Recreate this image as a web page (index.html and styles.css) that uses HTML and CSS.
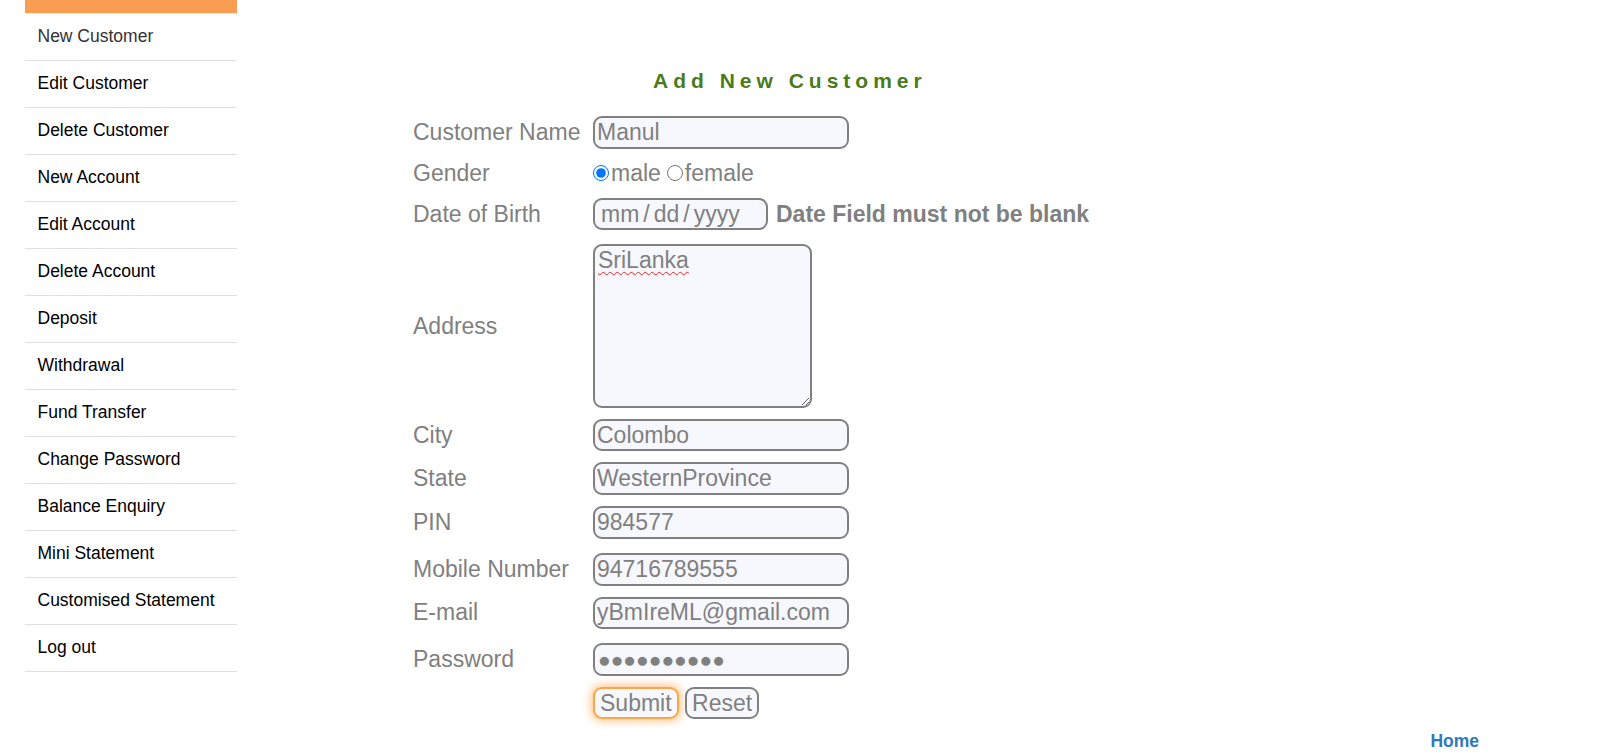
FILE: index.html
```html
<!DOCTYPE html>
<html lang="en">
<head>
<meta charset="utf-8">
<title>Guru99 Bank - Add New Customer</title>
<link rel="stylesheet" href="styles.css">
</head>
<body>
<div class="page">
  <nav class="sidebar">
    <div class="sidebar-top"></div>
    <ul class="menu">
      <li class="menu-item active"><a href="#">New Customer</a></li>
      <li class="menu-item"><a href="#">Edit Customer</a></li>
      <li class="menu-item"><a href="#">Delete Customer</a></li>
      <li class="menu-item"><a href="#">New Account</a></li>
      <li class="menu-item"><a href="#">Edit Account</a></li>
      <li class="menu-item"><a href="#">Delete Account</a></li>
      <li class="menu-item"><a href="#">Deposit</a></li>
      <li class="menu-item"><a href="#">Withdrawal</a></li>
      <li class="menu-item"><a href="#">Fund Transfer</a></li>
      <li class="menu-item"><a href="#">Change Password</a></li>
      <li class="menu-item"><a href="#">Balance Enquiry</a></li>
      <li class="menu-item"><a href="#">Mini Statement</a></li>
      <li class="menu-item"><a href="#">Customised Statement</a></li>
      <li class="menu-item"><a href="#">Log out</a></li>
    </ul>
  </nav>
  <main class="main">
    <p class="heading">Add New Customer</p>
    <form class="form" onsubmit="return false;">
      <label class="lbl">Customer Name</label>
      <div class="field"><input class="txt" type="text" value="Manul"></div>

      <label class="lbl">Gender</label>
      <div class="field gender"><input class="radio" type="radio" name="gender" checked>male <input class="radio radio-second" type="radio" name="gender">female</div>

      <label class="lbl">Date of Birth</label>
      <div class="field"><input class="txt date" type="date"> <label class="msg">Date Field must not be blank</label></div>

      <label class="lbl spaced">Address</label>
      <div class="field spaced"><textarea class="area">SriLanka</textarea></div>

      <label class="lbl">City</label>
      <div class="field"><input class="txt" type="text" value="Colombo"></div>

      <label class="lbl">State</label>
      <div class="field"><input class="txt" type="text" value="WesternProvince"></div>

      <label class="lbl">PIN</label>
      <div class="field"><input class="txt" type="text" value="984577"></div>

      <label class="lbl spaced">Mobile Number</label>
      <div class="field spaced"><input class="txt" type="text" value="94716789555"></div>

      <label class="lbl">E-mail</label>
      <div class="field"><input class="txt" type="text" value="yBmIreML@gmail.com"></div>

      <label class="lbl spaced">Password</label>
      <div class="field spaced"><input class="txt secret" type="text" value="●●●●●●●●●●" autocomplete="off"></div>

      <span class="lbl"></span>
      <div class="field buttons"><input class="btn btn-focus" type="submit" value="Submit"> <input class="btn" type="reset" value="Reset"></div>
    </form>
    <div class="footer"><a class="home" href="#">Home</a></div>
  </main>
</div>
</body>
</html>
```

FILE: styles.css
```css
html, body {
  margin: 0;
  padding: 0;
  background: #ffffff;
}

body {
  font-family: "Liberation Sans", Arial, sans-serif;
  overflow: hidden;
}

.page {
  display: flex;
  align-items: flex-start;
}

/* ---------- Sidebar ---------- */
.sidebar {
  margin-left: 25px;
  width: 212px;
  flex: none;
}

.sidebar-top {
  height: 13px;
  background: #f99d52;
  border-bottom: 1px solid #ececec;
}

.menu {
  list-style: none;
  margin: 0;
  padding: 0;
}

.menu-item {
  border-bottom: 1px solid #e0e0e0;
}

.menu-item a {
  display: block;
  padding: 12px 12px 14px 12.5px;
  line-height: 20px;
  font-size: 17.5px;
  color: #000000;
  text-decoration: none;
}

.menu-item.active a {
  color: #333333;
}

/* ---------- Main ---------- */
.main {
  flex: 1;
  padding-left: 176px;
  display: flex;
  flex-direction: column;
}

.heading {
  margin: 68.5px 0 0 240px;
  font-size: 21px;
  line-height: 24px;
  font-weight: bold;
  letter-spacing: 5px;
  color: #4b7b1a;
}

.form {
  margin-top: 23.5px;
  display: grid;
  grid-template-columns: 181px auto;
  row-gap: 11px;
  align-items: center;
  justify-content: start;
  margin-left: -1px;
}

.lbl {
  font-size: 23px;
  color: #808080;
  white-space: nowrap;
  padding-left: 1px;
}

.field {
  white-space: nowrap;
  font-size: 23px;
  color: #808080;
  display: flex;
  align-items: center;
}

.spaced {
  margin-top: 3px;
}

.txt {
  box-sizing: border-box;
  width: 256px;
  height: 32.7px;
  border: 2px solid #808080;
  border-radius: 9px;
  background: #f7f8fd;
  color: #808080;
  font-family: "Liberation Sans", Arial, sans-serif;
  font-size: 23px;
  padding: 0 2px;
  margin: 0;
  outline: none;
}

.secret {
  font-size: 21px;
  padding-left: 3px;
}

.date {
  width: 175px;
  padding-left: 5px;
}

.date::-webkit-calendar-picker-indicator {
  display: none;
}

.date::-webkit-datetime-edit-text {
  padding: 0 3px;
}

.msg {
  font-weight: bold;
  color: #808080;
  font-size: 23px;
  margin-left: 8px;
}

.gender {
  height: 26.5px;
}

.radio {
  width: 16px;
  height: 16px;
  margin: 0 2px 0 0;
}

.radio-second {
  margin-left: 6px;
}

.area {
  box-sizing: border-box;
  width: 219px;
  height: 163.4px;
  border: 2px solid #808080;
  border-radius: 9px;
  background: #f7f8fd;
  color: #808080;
  font-family: "Liberation Sans", Arial, sans-serif;
  font-size: 23px;
  padding: 1px 3px;
  margin: 0;
  outline: none;
  text-decoration: underline wavy #e8241f;
  text-decoration-thickness: 1px;
  text-underline-offset: 3px;
}

.buttons {
  gap: 6.5px;
}

.btn {
  box-sizing: border-box;
  height: 32.6px;
  padding: 0 5px;
  border: 2px solid #808080;
  border-radius: 9px;
  background: #f7f8fd;
  color: #808080;
  font-family: "Liberation Sans", Arial, sans-serif;
  font-size: 23px;
  margin: 0;
}

.btn-focus {
  border-color: #ffa545;
  box-shadow: 0 0 8px 2px rgba(255, 150, 40, 0.55);
}

.footer {
  margin-top: 12px;
  text-align: right;
  padding-right: 121px;
}

.home {
  font-size: 17.5px;
  font-weight: bold;
  color: #3079b9;
  text-decoration: none;
}
```
